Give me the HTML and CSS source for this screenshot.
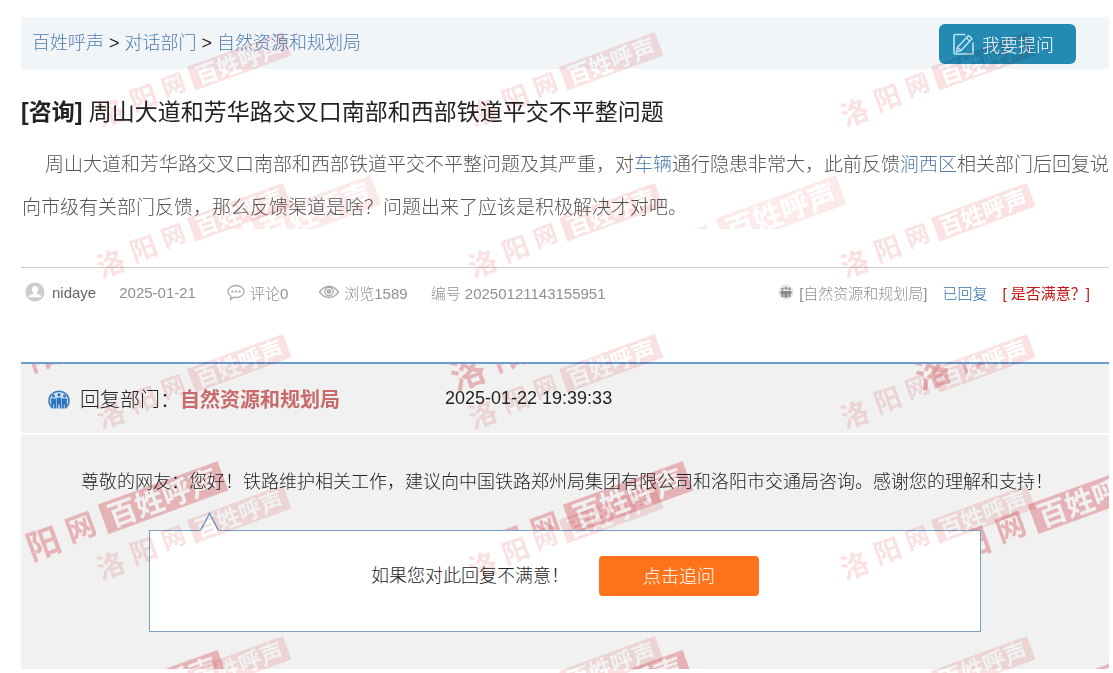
FILE: index.html
```html
<!DOCTYPE html>
<html lang="zh-CN">
<head>
  <meta charset="UTF-8" />
  <meta name="viewport" content="width=device-width, initial-scale=1" />
  <title>百姓呼声 - 自然资源和规划局</title>
  <link rel="stylesheet" href="styles.css">
</head>
<body>
  <header class="topbar">
    <nav class="crumbs">
      <a href="#">百姓呼声</a> &gt; <a href="#">对话部门</a> &gt; <a href="#">自然资源和规划局</a>
    </nav>
    <button type="button" class="ask">
      <svg width="21" height="22" viewBox="0 0 21 22" fill="none" stroke="#b9e3f2" stroke-width="1.6">
        <path d="M12.500 1.500H2a1 1 0 0 0-1 1V20a1 1 0 0 0 1 1h17a1 1 0 0 0 1-1V9.500" />
        <path d="M15.500 2.500l3.500 3.200L8 17.500l-4.500 1.500 1-4.700z" stroke-linejoin="round" />
        <path d="M13.300 5l3.500 3.200M4.500 14.300L8 17.500" stroke-width="1.200" />
      </svg>
      我要提问
    </button>
  </header>

  <main>
    <article>
      <h1><b>[咨询]</b> 周山大道和芳华路交叉口南部和西部铁道平交不平整问题</h1>
      <div class="question">
        <svg class="stamp stamp-pale" aria-hidden="true"><rect width="100%" height="100%" fill="url(#tile-question)" /></svg>
        <p>周山大道和芳华路交叉口南部和西部铁道平交不平整问题及其严重，对<a href="#">车辆</a>通行隐患非常大，此前反馈<a href="#">涧西区</a>相关部门后回复说向市级有关部门反馈，那么反馈渠道是啥？问题出来了应该是积极解决才对吧。</p>
      </div>
      <div class="meta">
        <span class="item user">
          <svg width="20" height="20" viewBox="0 0 20 20">
            <circle cx="10" cy="10" r="9.500" fill="#ccc" />
            <path d="M10 4c2 0 3.200 1.400 3.200 3.300 0 1.500-.6 2.700-1.400 3.400v1l3.700 1.500c.6.300.8 1 .8 2H3.700c0-1 .2-1.700.8-2l3.700-1.500v-1C7.400 10 6.800 8.800 6.800 7.300 6.800 5.400 8 4 10 4z" fill="#fff" />
          </svg>
          nidaye
        </span>
        <span class="item">2025-01-21</span>
        <span class="item count">
          <svg width="18" height="17" viewBox="0 0 18 17" fill="none" stroke="#aaa" stroke-width="1.300">
            <path d="M9 1.500c4.500 0 8 2.600 8 6s-3.500 6-8 6c-.8 0-1.600-.1-2.400-.3L3.500 15.500l.3-3.500C2 10.800 1 9.300 1 7.500c0-3.400 3.500-6 8-6z" />
            <path d="M4.500 7.500h2M8 7.500h2M11.500 7.500h2" stroke-width="2" />
          </svg>
          评论0
        </span>
        <span class="item count">
          <svg width="20" height="14" viewBox="0 0 20 14" fill="none" stroke="#aaa" stroke-width="1.300">
            <path d="M.5 7C3 3.500 6.200 1.500 10 1.500S17 3.500 19.500 7C17 10.500 13.800 12.500 10 12.500S3 10.500.5 7z" />
            <circle cx="10" cy="6.500" r="4.200" />
            <circle cx="10" cy="6.500" r="1.800" fill="#bbb" />
          </svg>
          浏览1589
        </span>
        <span class="item">编号 20250121143155951</span>
        <span class="status">
          <span class="item">
            <svg width="16" height="16" viewBox="0 0 16 16">
              <circle cx="8" cy="8" r="7.500" fill="#e4e4e4" />
              <use href="#people" fill="#8a8a8a" />
            </svg>
            [自然资源和规划局]
          </span>
          <span class="done">已回复</span>
          <a href="#" class="rate">[ 是否满意？]</a>
        </span>
      </div>
    </article>

    <section class="reply">
      <svg class="stamp stamp-deep" aria-hidden="true"><rect width="100%" height="100%" fill="url(#tile-reply)" /></svg>
      <div class="reply-head">
        <svg width="22" height="20" viewBox="0 0 22 20">
          <path d="M4 18.500A10 9.500 0 1 1 18 18.500" fill="#cfe3f5" stroke="#3a7fc0" stroke-width="1.600" />
          <g fill="#2b74b8">
            <circle cx="5.500" cy="7" r="1.500" /><circle cx="11" cy="5.800" r="1.600" /><circle cx="16.500" cy="7" r="1.500" />
            <path d="M3 9.500h5v10H6.200v-4h-.9v4H3.500zM8.600 8.800h4.800v10.700h-1.700v-4h-1.400v4H8.600zM14 9.500h5l-.5 10h-1.800v-4h-.9v4H14z" />
          </g>
        </svg>
        <span>回复部门：<strong>自然资源和规划局</strong></span>
        <time datetime="2025-01-22T19:39:33">2025-01-22 19:39:33</time>
      </div>
      <div class="reply-body">
        <p>尊敬的网友：您好！铁路维护相关工作，建议向中国铁路郑州局集团有限公司和洛阳市交通局咨询。感谢您的理解和支持！</p>
        <div class="followup">
          <svg class="arrow" width="20" height="19" viewBox="0 0 20 19">
            <path d="M0 19L9.500 1 19 19" fill="#fff" />
            <path d="M.5 18.500L9.500 1.500l9 17" fill="none" stroke="#6f9fca" stroke-width="1.500" />
          </svg>
          <span>如果您对此回复不满意！</span>
          <button type="button">点击追问</button>
        </div>
      </div>
    </section>
  </main>

  <!-- repeated site stamp -->
  <svg class="stamp stamp-page" aria-hidden="true">
    <defs>
      <g id="people">
        <circle cx="4.500" cy="5" r="1.200" /><circle cx="8" cy="4.200" r="1.300" /><circle cx="11.500" cy="5" r="1.200" />
        <path d="M2.500 7h11v3h-1v3h-2v-3h-.8v3.500H6.300V10h-.8v3h-2v-3h-1z" />
      </g>
      <g id="mark" transform="translate(187 67) rotate(-20)">
        <rect width="102" height="25" fill="#d9303a" />
        <text x="5" y="21" font-size="23" fill="#fff">百姓呼声</text>
        <g fill="#d9303a">
          <text x="-101" y="27" font-size="28">洛</text>
          <text x="-65" y="24" font-size="27">阳</text>
          <text x="-31" y="21" font-size="24">网</text>
        </g>
      </g>
      <pattern id="tile-page" width="372" height="151" patternUnits="userSpaceOnUse"><use href="#mark" /></pattern>
      <pattern id="tile-reply" width="372" height="151" patternUnits="userSpaceOnUse" patternTransform="translate(-157 57) scale(1.25)"><use href="#mark" /></pattern>
      <pattern id="tile-question" width="372" height="151" patternUnits="userSpaceOnUse" patternTransform="translate(-4 -8) scale(1.25)"><use href="#mark" /></pattern>
    </defs>
    <rect width="100%" height="100%" fill="url(#tile-page)" />
  </svg>
</body>
</html>
```
FILE: styles.css
```css
body {
  margin: 17px 4px 4px 21px;
  font-family: "Liberation Sans", "Noto Sans CJK SC", sans-serif;
  font-size: 18px;
  font-weight: 300;
  color: #222;
  background-color: #fff;
}

a {
  color: #4f7cae;
  text-decoration: none;
}

a:hover {
  text-decoration: underline;
}

button {
  font: inherit;
  color: #fff;
  height: 40px;
  border: none;
  cursor: pointer;
}

/* Top bar */
.topbar {
  display: flex;
  justify-content: space-between;
  align-items: center;
  height: 52px;
  padding: 0 33px 0 11px;
  background-color: #f1f5f8;
}

.crumbs {
  line-height: 24px;
}

.ask {
  display: flex;
  align-items: center;
  gap: 8px;
  margin-top: 2px;
  padding: 0 22px 0 14px;
  border-radius: 6px;
  background-color: #2489b3;
}

/* Question */
h1 {
  margin: 25px 0 13px;
  font-size: 23px;
  font-weight: 400;
  line-height: 36px;
}

h1 b {
  font-weight: 700;
}

.question {
  position: relative;
  padding-left: 1px;
  margin-right: -1px;
}

.question p {
  position: relative;
  margin: 0;
  font-size: 19px;
  line-height: 43px;
  text-indent: 23px;
  color: #555;
}

.meta {
  display: flex;
  align-items: center;
  gap: 23px;
  height: 48px;
  margin-top: 38px;
  padding: 0 19px 0 4px;
  border-top: 1px solid #ccc;
  font-size: 15px;
  color: #909090;
  white-space: nowrap;
}

.item {
  display: flex;
  align-items: center;
  gap: 5px;
}

.user {
  gap: 7px;
  color: #666;
}

.count {
  margin-left: 8px;
}

.status {
  display: flex;
  gap: 15px;
  margin-left: auto;
}

.done {
  color: #2f6ea8;
}

.rate {
  font-weight: 400;
  color: #c81414;
}

/* Reply */
.reply {
  position: relative;
  margin-top: 46px;
  border-top: 2px solid #6c9bd2;
  background-color: #f1f1f1;
}

.reply-head {
  position: relative;
  display: flex;
  align-items: center;
  gap: 10px;
  height: 69px;
  padding-left: 27px;
  border-bottom: 2px solid #fff;
  font-size: 20px;
}

.reply-head strong {
  font-weight: 700;
  color: #c96a6a;
}

.reply-head time {
  margin-left: 95px;
  font-size: 18px;
}

.reply-body {
  position: relative;
  padding: 29px 40px 37px 60px;
}

.reply-body p {
  margin: 0 0 30px;
  line-height: 36px;
}

.followup {
  position: relative;
  display: flex;
  justify-content: center;
  gap: 30px;
  box-sizing: border-box;
  max-width: 832px;
  min-height: 102px;
  margin: 0 88px 0 68px;
  padding: 25px 0;
  border: 1px solid #7ba0c4;
  background-color: #fff;
  line-height: 40px;
}

.followup .arrow {
  position: absolute;
  top: -19px;
  left: 50px;
}

.followup button {
  width: 160px;
  border-radius: 4px;
  background-color: #ff741a;
}

/* Stamps */
.stamp {
  position: absolute;
  top: 0;
  left: 0;
  width: 100%;
  height: 100%;
  pointer-events: none;
  mix-blend-mode: multiply;
  font-family: "Noto Sans CJK SC", sans-serif;
  font-weight: 700;
}

.stamp-page {
  position: fixed;
  opacity: 0.15;
}

.stamp-pale {
  opacity: 0.1;
}

.stamp-deep {
  opacity: 0.32;
}
```
